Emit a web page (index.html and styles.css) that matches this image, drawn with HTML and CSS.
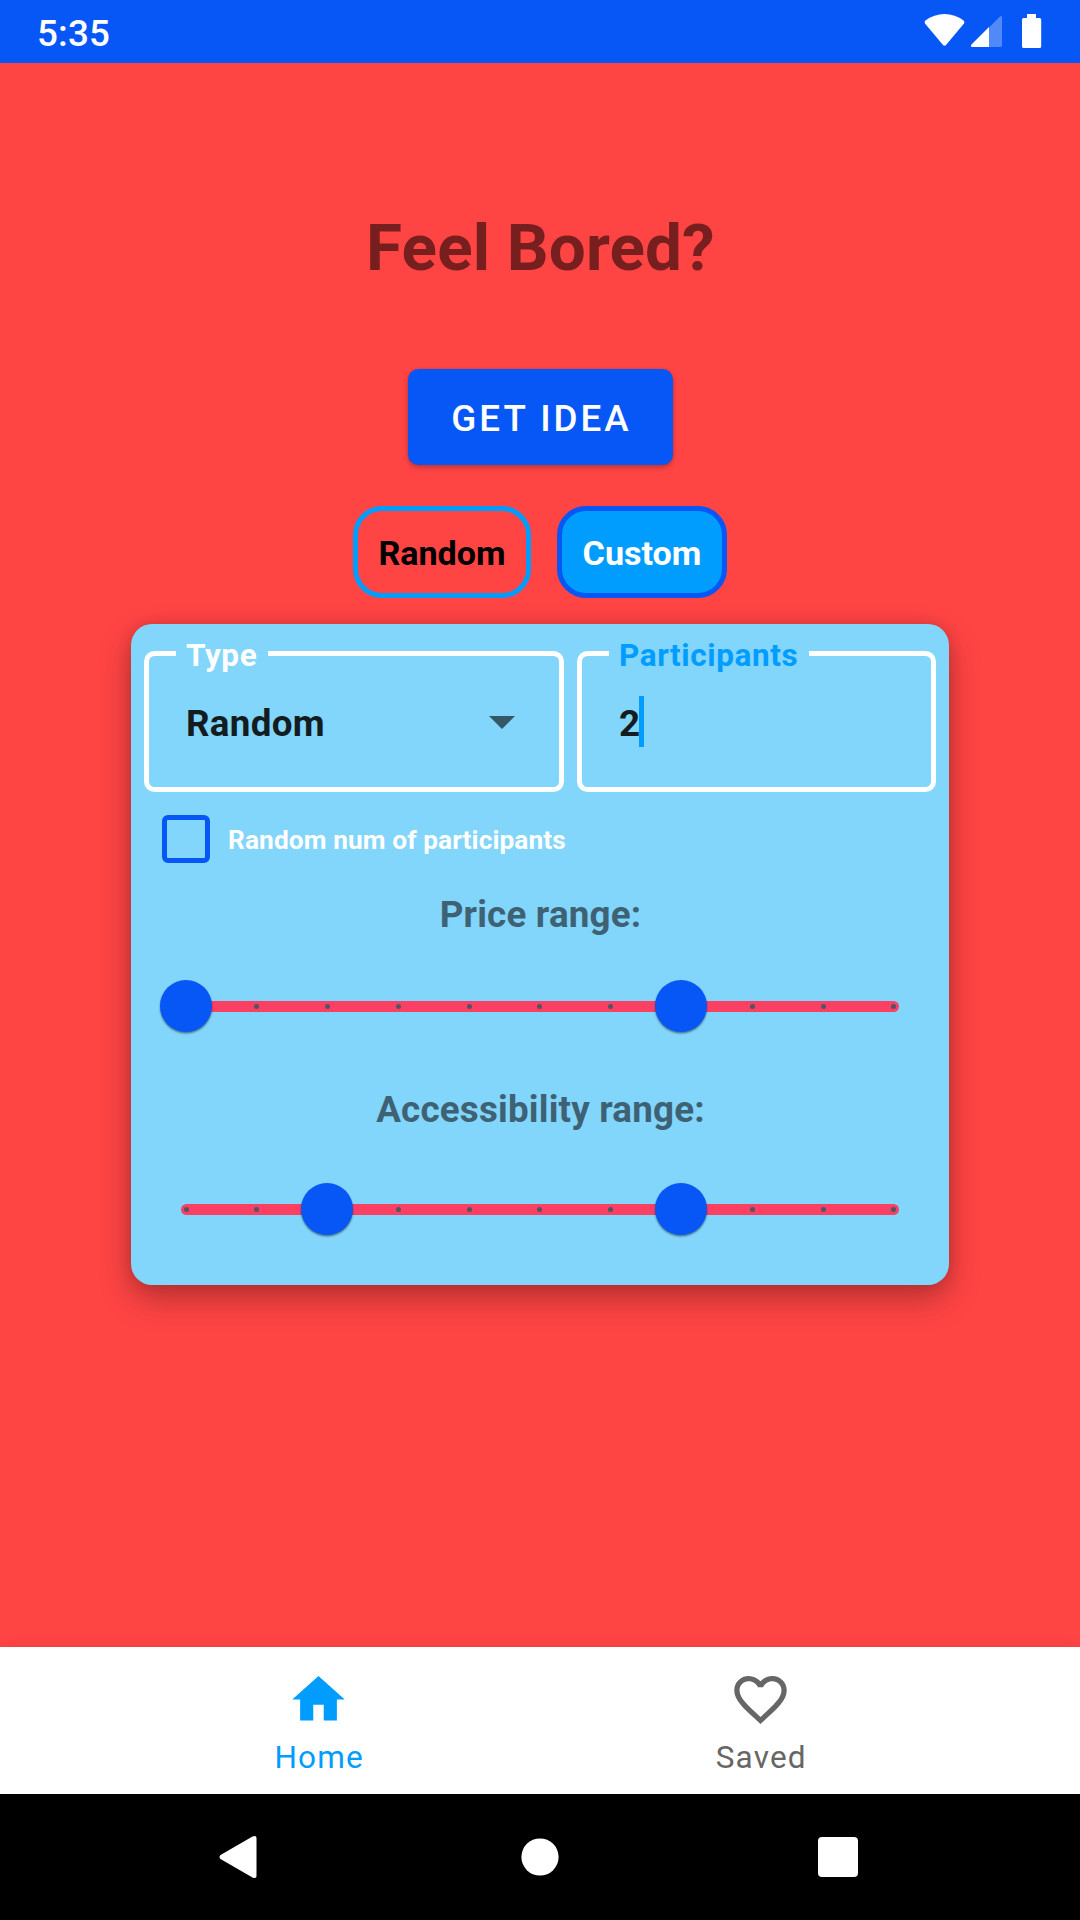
FILE: index.html
```html
<!DOCTYPE html>
<html lang="en">
<head>
<meta charset="utf-8">
<title>Feel Bored?</title>
<link rel="stylesheet" href="styles.css">
</head>
<body>
<div class="screen">
  <header class="status-bar">
    <span class="clock">5:35</span>
    <svg class="status-icons" width="120" height="36" viewBox="0 0 120 36">
      <path class="solid" d="M1 10.500Q0 9 1.500 7.500Q10 1 20.500 1T39.500 7.500Q41 9 40 10.500L22 32Q20.500 33.500 19 32Z"/>
      <path class="faint" d="M65 14.500L75.500 4Q78 2 78 4.500V32.500Q78 34 76.500 34H65Z"/>
      <path class="solid" d="M65 14V34H48.500Q46 34 47.500 31.500Z"/>
      <path class="solid" d="M103 1H112V5H115.500Q117.200 5 117.200 6.500V33.500Q117.200 35 115.500 35H99.700Q98 35 98 33.500V6.500Q98 5 99.700 5H103Z"/>
    </svg>
  </header>

  <main class="content">
    <h1 class="title">Feel Bored?</h1>
    <button class="idea-button">GET IDEA</button>
    <div class="chips">
      <button class="chip">Random</button>
      <button class="chip chip-active">Custom</button>
    </div>

    <section class="card">
      <div class="fields">
        <fieldset class="field field-type">
          <legend>Type</legend>
          <span>Random</span>
          <svg class="arrow" width="26" height="13" viewBox="0 0 26 13"><path d="M0 0H26L13 13Z"/></svg>
        </fieldset>
        <fieldset class="field field-people">
          <legend>Participants</legend>
          <span>2</span><i class="caret"></i>
        </fieldset>
      </div>

      <label class="check-row"><span class="checkbox"></span><span class="check-text">Random num of participants</span></label>

      <h2 class="range-title">Price range:</h2>
      <div class="slider">
        <div class="track"><i></i><i></i><i></i><i></i><i></i><i></i><i></i><i></i><i></i><i></i><i></i></div>
        <span class="thumb" style="left:0%"></span>
        <span class="thumb" style="left:70%"></span>
      </div>

      <h2 class="range-title range-title-second">Accessibility range:</h2>
      <div class="slider slider-second">
        <div class="track"><i></i><i></i><i></i><i></i><i></i><i></i><i></i><i></i><i></i><i></i><i></i></div>
        <span class="thumb" style="left:20%"></span>
        <span class="thumb" style="left:70%"></span>
      </div>
    </section>
  </main>

  <nav class="tabs">
    <a class="tab tab-active">
      <svg width="63" height="63" viewBox="0 0 24 24"><path d="M10 20v-6h4v6h5v-8h3L12 3 2 12h3v8z"/></svg>
      <span>Home</span>
    </a>
    <a class="tab">
      <svg width="63" height="63" viewBox="0 0 24 24"><path d="M16.500 3c-1.740 0-3.410.81-4.500 2.090C10.910 3.810 9.240 3 7.500 3 4.420 3 2 5.420 2 8.500c0 3.780 3.400 6.860 8.550 11.540L12 21.350l1.450-1.320C18.600 15.360 22 12.280 22 8.500 22 5.420 19.580 3 16.500 3zm-4.400 15.550l-.1.100-.1-.1C7.140 14.240 4 11.390 4 8.500 4 6.500 5.500 5 7.500 5c1.540 0 3.040.99 3.570 2.360h1.870C13.460 5.990 14.960 5 16.500 5c2 0 3.500 1.500 3.500 3.500 0 2.890-3.140 5.740-7.900 10.050z"/></svg>
      <span>Saved</span>
    </a>
  </nav>

  <footer class="system-bar">
    <svg width="38" height="44" viewBox="0 0 38 44"><path d="M1.500 24Q-.5 22 1.500 20L33.500 1.500Q37.500 0 37.500 3V41Q37.500 44 33.500 42.500Z"/></svg>
    <svg class="home-button" width="38" height="38" viewBox="0 0 38 38"><circle cx="19" cy="19" r="18.600"/></svg>
    <svg width="40" height="40" viewBox="0 0 40 40"><rect width="40" height="40" rx="4"/></svg>
  </footer>
</div>
</body>
</html>
```
FILE: styles.css
```css
* { box-sizing: border-box; }

body {
  margin: 0;
  font-family: Roboto, "Liberation Sans", sans-serif;
}

button { font-family: inherit; cursor: pointer; }

.screen {
  width: 1080px;
  height: 1920px;
  display: flex;
  flex-direction: column;
  overflow: hidden;
  background: #ff4444;
}

/* Status bar */
.status-bar {
  flex: none;
  height: 63px;
  padding: 3px 36px 0 37px;
  display: flex;
  justify-content: space-between;
  background: #0657f6;
  color: #fff;
}
.clock { font-size: 36.75px; font-weight: 500; line-height: 61px; letter-spacing: .2px; }
.status-icons { margin: 10px 0 0; }
.solid { fill: #fff; }
.faint { fill: #fff; fill-opacity: .3; }

/* Main area */
.content {
  flex: 1;
  display: flex;
  flex-direction: column;
  align-items: center;
}
.title {
  margin: 145px 0 0;
  padding-left: 1px;
  font-size: 65.6px;
  font-weight: 700;
  line-height: 80px;
  letter-spacing: .15px;
  color: #771f1f;
}
.idea-button {
  margin-top: 81px;
  width: 265px;
  height: 96px;
  padding: 2px 0 0 3px;
  border: 0;
  border-radius: 10.500px;
  background: #0657f6;
  color: #fff;
  font-size: 36.75px;
  font-weight: 500;
  letter-spacing: 3px;
  box-shadow: 0 3px 5px rgba(0, 0, 0, .2), 0 0 3px rgba(0, 0, 0, .12);
}
.chips { display: flex; gap: 26px; margin-top: 41px; }
.chip {
  height: 92px;
  width: 178px;
  padding: 1px 0 0;
  border: 5px solid #009dff;
  border-radius: 29px;
  background: transparent;
  color: #000;
  font-size: 34.120px;
  font-weight: 700;
}
.chip-active {
  width: 170px;
  background: #009dff;
  border-color: #0657f6;
  color: #fff;
}

/* Options card */
.card {
  width: 818px;
  height: 661px;
  margin-top: 26px;
  padding: 11px 13px;
  border-radius: 21px;
  background: #82d5fb;
  box-shadow: 0 14px 32px rgba(0, 0, 0, .28), 0 0 14px rgba(0, 0, 0, .12);
}
.fields { display: flex; gap: 13px; }
.field {
  margin: 0;
  height: 157px;
  min-width: 0;
  padding: 0 0 0 27px;
  border: 5px solid #fff;
  border-radius: 10.500px;
  font-size: 36.750px;
  font-weight: 700;
  line-height: 48px;
  letter-spacing: .3px;
  color: #121c21;
}
.field-type { width: 420px; }
.field-people { width: 359px; }
.field span { display: inline-block; margin: 28px 0 0 10px; }
.field legend {
  padding: 4px 11px 0 10px;
  font-size: 31.500px;
  line-height: 33px;
  letter-spacing: .6px;
  color: #fff;
}
.field-people legend { color: #009dff; }
.arrow { margin: 0 0 7px 155px; fill: #355866; }
.caret {
  display: inline-block;
  width: 5px;
  height: 51px;
  margin-left: -1px;
  vertical-align: -11px;
  background: #009dff;
}
.check-row {
  display: flex;
  align-items: center;
  gap: 18px;
  height: 48px;
  margin: 23px 0 0 18px;
  font-size: 26.250px;
  font-weight: 700;
  line-height: 32px;
  letter-spacing: .1px;
  color: #fff;
}
.check-text { padding-top: 2px; }
.checkbox {
  width: 48px;
  height: 48px;
  border: 5.500px solid #0657f6;
  border-radius: 6px;
}
.range-title {
  margin: 28px 0 0;
  padding-left: 1px;
  font-size: 36.750px;
  font-weight: 700;
  line-height: 48px;
  letter-spacing: .2px;
  text-align: center;
  color: #3e6274;
}
.range-title-second { margin-top: 54px; }

.slider {
  position: relative;
  width: 707px;
  height: 52px;
  margin: 41px 0 0 42px;
  padding-top: 21px;
}
.slider-second { margin-top: 49px; }
.track {
  display: flex;
  justify-content: space-between;
  align-items: center;
  height: 11px;
  margin: 0 -6px 0 -5px;
  padding: 0 2.500px;
  border-radius: 5.500px;
  background: #fb4064;
}
.track i { width: 5px; height: 5px; border-radius: 50%; background: #4e5565; }
.thumb {
  position: absolute;
  top: 0;
  width: 52px;
  height: 52px;
  margin-left: -26px;
  border-radius: 50%;
  background: #0657f6;
  box-shadow: 0 1.500px 2px rgba(0, 0, 0, .45);
}

/* Bottom tabs */
.tabs {
  flex: none;
  height: 147px;
  padding-right: 1px;
  display: flex;
  justify-content: center;
  background: #fff;
  box-shadow: 0 0 14px rgba(0, 0, 0, .08);
}
.tab {
  width: 442px;
  display: flex;
  flex-direction: column;
  align-items: center;
  padding-top: 21px;
  color: #666;
  font-size: 31.500px;
  letter-spacing: 1.200px;
}
.tab svg { fill: currentColor; }
.tab span { margin-top: 9px; padding-left: 1.500px; line-height: 36px; }
.tab-active { color: #009dff; }

/* System navigation */
.system-bar {
  flex: none;
  height: 126px;
  padding: 0 222px 0 219px;
  display: flex;
  align-items: center;
  justify-content: space-between;
  background: #000;
}
.system-bar svg { fill: #fff; }
.system-bar .home-button { margin-left: 4px; }
```
